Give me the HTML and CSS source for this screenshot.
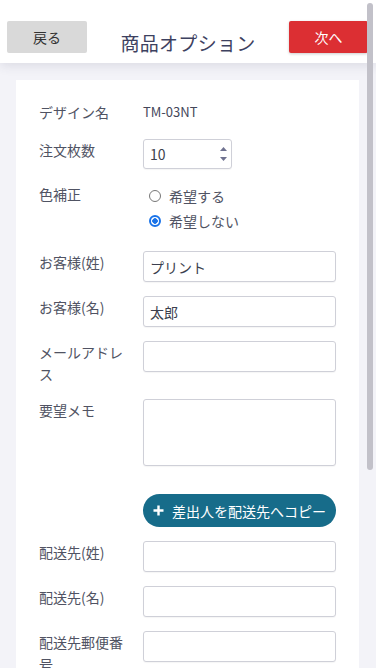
FILE: index.html
```html
<!DOCTYPE html>
<html lang="ja">
<head>
    <meta charset="UTF-8">
    <meta name="viewport" content="width=device-width, initial-scale=1.0">
    <title>商品オプション</title>
    <link rel="stylesheet" href="styles.css">
</head>
<body>
    <header class="topbar">
        <button class="btn btn-back">戻る</button>
        <h1 class="title">商品オプション</h1>
        <button class="btn btn-next">次へ</button>
    </header>

    <main class="card">
        <form class="options">
            <div class="row row-static">
                <span class="label">デザイン名</span>
                <span class="value">TM-03NT</span>
            </div>

            <div class="row">
                <label class="label" for="qty">注文枚数</label>
                <div class="number">
                    <input type="text" id="qty" class="field" value="10">
                    <span class="spin">
                        <svg width="9" height="20" viewBox="0 0 9 20">
                            <path d="M4.5 3 L8 7 H1 Z" fill="#6f7290"/>
                            <path d="M1 13 H8 L4.5 17 Z" fill="#6f7290"/>
                        </svg>
                    </span>
                </div>
            </div>

            <div class="row">
                <span class="label">色補正</span>
                <div class="radios">
                    <label class="radio"><input type="radio" name="color"> 希望する</label>
                    <label class="radio"><input type="radio" name="color" checked> 希望しない</label>
                </div>
            </div>

            <div class="row">
                <label class="label" for="sei">お客様(姓)</label>
                <input type="text" id="sei" class="field" value="プリント">
            </div>

            <div class="row">
                <label class="label" for="mei">お客様(名)</label>
                <input type="text" id="mei" class="field" value="太郎">
            </div>

            <div class="row">
                <label class="label" for="mail">メールアドレス</label>
                <input type="text" id="mail" class="field">
            </div>

            <div class="row">
                <label class="label" for="memo">要望メモ</label>
                <textarea id="memo" class="field memo"></textarea>
            </div>

            <div class="row row-copy">
                <span></span>
                <button type="button" class="btn-copy">
                    <svg width="11" height="11" viewBox="0 0 11 11">
                        <path d="M5.5 0.5 V10.5 M0.5 5.5 H10.5" stroke="#fff" stroke-width="2.4"/>
                    </svg>
                    差出人を配送先へコピー
                </button>
            </div>

            <div class="row">
                <label class="label" for="dsei">配送先(姓)</label>
                <input type="text" id="dsei" class="field">
            </div>

            <div class="row">
                <label class="label" for="dmei">配送先(名)</label>
                <input type="text" id="dmei" class="field">
            </div>

            <div class="row">
                <label class="label" for="zip">配送先郵便番号</label>
                <input type="text" id="zip" class="field">
            </div>
        </form>
    </main>

    <div class="scroll-thumb"></div>
</body>
</html>
```

FILE: styles.css
```css
html {
    scrollbar-width: none;
}
html::-webkit-scrollbar {
    display: none;
}
body {
    margin: 0;
    font-family: "Noto Sans CJK JP", "Noto Sans", sans-serif;
    background: #f3f3f8;
    color: #505363;
    font-size: 14px;
}
.topbar {
    display: flex;
    align-items: center;
    justify-content: space-between;
    height: 63px;
    padding: 0 8px 0 7px;
    background: #fff;
    box-shadow: 0 3px 10px rgba(60, 60, 90, 0.12);
    box-sizing: border-box;
    position: relative;
}
.btn {
    width: 80px;
    height: 32px;
    border: none;
    border-radius: 2px;
    font-family: inherit;
    font-size: 14px;
    margin-top: 11px;
}
.btn-back {
    background: #d9d9d9;
    color: #333;
}
.btn-next {
    width: 79px;
    background: #dc2f33;
    color: #fff;
    box-shadow: 0 1px 3px rgba(0, 0, 0, 0.2);
}
.title {
    margin: 22px 0 0;
    font-size: 19px;
    font-weight: 400;
    color: #3d4160;
    letter-spacing: 0.3px;
}
.card {
    margin: 17px 17px 0 16px;
    padding: 21px 23px 30px;
    background: #fff;
}
.options {
    display: flex;
    flex-direction: column;
    gap: 14px;
}
.row {
    display: grid;
    grid-template-columns: 90px 1fr;
    column-gap: 14px;
    align-items: start;
}
.label {
    line-height: 22px;
    color: #505363;
}
.row-static {
    min-height: 24px;
}
.value {
    font-size: 13px;
    line-height: 22px;
    color: #44475a;
}
.field {
    box-sizing: border-box;
    width: 100%;
    height: 31px;
    padding: 0 6px;
    border: 1px solid #cfd0d8;
    border-radius: 3px;
    font-family: inherit;
    font-size: 14px;
    color: #3c3f4e;
    background: #fff;
    box-shadow: 0 1px 1px rgba(0, 0, 0, 0.04);
}
.memo {
    height: 67px;
    resize: none;
}
.number {
    position: relative;
    width: 89px;
}
.number .field {
    height: 30px;
}
.spin {
    position: absolute;
    right: 4px;
    top: 5px;
    display: flex;
}
.radios {
    display: flex;
    flex-direction: column;
    padding: 0 0 4px 6px;
}
.radio {
    display: flex;
    align-items: center;
    gap: 8px;
    height: 25px;
    color: #505363;
}
.radio input {
    appearance: none;
    margin: 0;
    width: 12px;
    height: 12px;
    border: 1px solid #777;
    border-radius: 50%;
    box-sizing: border-box;
}
.radio input:checked {
    border: 2px solid #1a73e8;
    background: radial-gradient(circle, #1a73e8 0 2.5px, #fff 3px);
}
.row-copy {
    margin-top: 14px;
}
.btn-copy {
    display: flex;
    align-items: center;
    justify-content: center;
    gap: 8px;
    height: 33px;
    border: none;
    border-radius: 17px;
    background: #176c8a;
    color: #fff;
    font-family: inherit;
    font-size: 14px;
}
.scroll-thumb {
    position: fixed;
    top: 3px;
    right: 3px;
    width: 6px;
    height: 467px;
    border-radius: 3px;
    background: #c2c1c9;
}
```
